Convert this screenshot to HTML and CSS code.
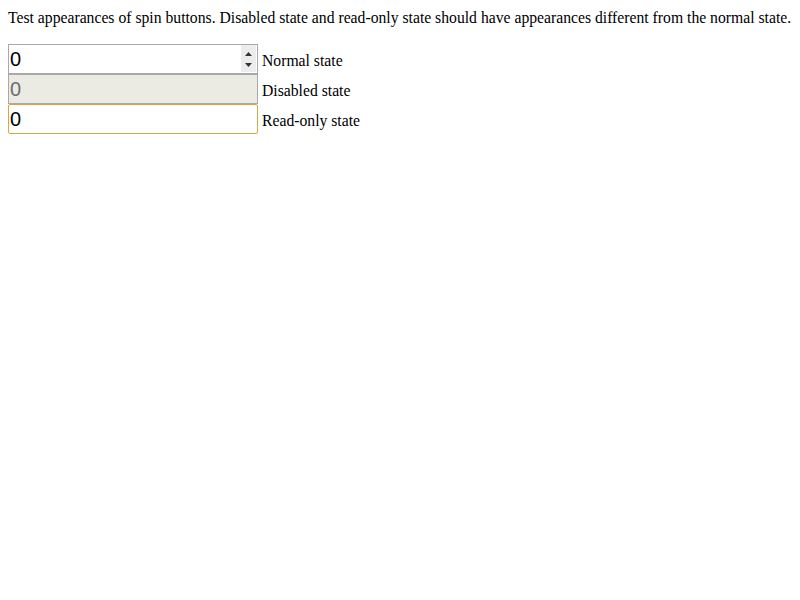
FILE: index.html
```html
<!DOCTYPE html>
<html>
<head>
<meta charset="utf-8">
<link rel="stylesheet" href="styles.css">
</head>
<body>
<p class="intro">Test appearances of spin buttons. Disabled state and read-only state should have appearances different from the normal state.</p>
<div class="row"><span class="field"><input class="spin" type="number" value="0"><span class="spinner"><svg width="15" height="27" viewBox="0 0 15 27"><path d="M4 11 L11 11 L7.5 7 Z" fill="#333"/><path d="M4 18 L11 18 L7.5 22 Z" fill="#333"/></svg></span></span><span class="label">Normal state</span></div>
<div class="row"><span class="field"><input class="spin" type="number" value="0" disabled></span><span class="label">Disabled state</span></div>
<div class="row"><span class="field"><input class="spin ro" type="number" value="0" readonly></span><span class="label">Read-only state</span></div>
</body>
</html>
```
FILE: styles.css
```css
body {
  margin: 8px;
  font-family: "Liberation Serif", serif;
  font-size: 15.7px;
}
.intro {
  margin: 0 0 18px 0;
  padding-top: 1px;
  line-height: 17px;
  white-space: nowrap;
}
.row {
  display: flex;
  align-items: flex-start;
  height: 30px;
  gap: 4px;
}
.label {
  line-height: 30px;
  padding-top: 2px;
}
.field {
  position: relative;
  display: inline-block;
}
.spin {
  box-sizing: border-box;
  display: block;
  width: 250px;
  height: 30px;
  margin: 0;
  padding: 1px 1px 0 1px;
  font-family: "Liberation Sans", sans-serif;
  font-size: 20px;
  border: 1px solid #a9a9a9;
  background: #fff;
  color: #000;
  outline: none;
}
.spin::-webkit-inner-spin-button,
.spin::-webkit-outer-spin-button {
  -webkit-appearance: none;
  margin: 0;
  display: none;
}
.spinner {
  position: absolute;
  top: 1px;
  right: 2px;
  width: 15px;
  height: 27px;
  background: #ececec;
  display: block;
}
.spinner svg {
  display: block;
}
.spin:disabled {
  background: #ebebe4;
  color: #6d6d6d;
  border-color: #a9a9a9;
}
.ro {
  border-color: #e0a33c;
  border-radius: 2px;
}
```
